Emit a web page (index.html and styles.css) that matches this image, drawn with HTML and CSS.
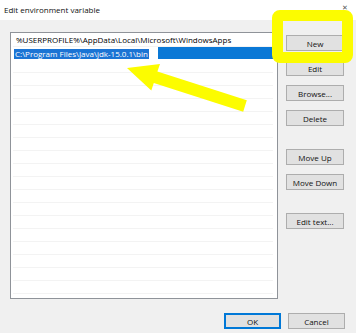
FILE: index.html
```html
<!DOCTYPE html>
<html lang="en">
<head>
  <meta charset="UTF-8">
  <title>Edit environment variable</title>
  <link rel="stylesheet" href="styles.css">
</head>
<body>
  <div class="window">
    <div class="titlebar">
      <span class="title">Edit environment variable</span>
      <span class="close">&#x2715;</span>
    </div>
    <div class="main">
      <!-- path entries -->
      <div class="list">
        <div class="row">%USERPROFILE%\AppData\Local\Microsoft\WindowsApps</div>
        <div class="row selected"><span class="edit"><span class="sel">C:\Program Files\Java\jdk-15.0.1\bin</span></span></div>
        <div class="row"></div>
        <div class="row"></div>
        <div class="row"></div>
        <div class="row"></div>
        <div class="row"></div>
        <div class="row"></div>
        <div class="row"></div>
        <div class="row"></div>
        <div class="row"></div>
        <div class="row"></div>
        <div class="row"></div>
        <div class="row"></div>
        <div class="row"></div>
        <div class="row"></div>
        <div class="row"></div>
        <div class="row"></div>
        <div class="row"></div>
        <div class="row"></div>
      </div>
      <!-- side buttons -->
      <div class="actions">
        <button type="button" class="btn">New</button>
        <button type="button" class="btn">Edit</button>
        <button type="button" class="btn">Browse...</button>
        <button type="button" class="btn">Delete</button>
        <button type="button" class="btn spaced">Move Up</button>
        <button type="button" class="btn">Move Down</button>
        <button type="button" class="btn spaced">Edit text...</button>
      </div>
    </div>
    <div class="footer">
      <button type="button" class="btn default">OK</button>
      <button type="button" class="btn">Cancel</button>
    </div>

    <!-- annotations drawn over the dialog -->
    <div class="highlight"></div>
    <svg class="arrow" width="356" height="333" viewBox="0 0 356 333">
      <polygon points="127,68 160,64 157.4,71.5 246.8,100.3 243.2,111.7 153.8,82.9 151.3,90.5" fill="#fcfc00"/>
    </svg>
  </div>
</body>
</html>
```

FILE: styles.css
```css
* { margin: 0; padding: 0; box-sizing: border-box; }
html, body { height: 100%; }
body {
  font-family: 'Open Sans', 'Noto Sans', sans-serif;
  font-size: 8px;
  color: #000;
  background: #f0f0f0;
}
.window {
  position: relative;
  width: 356px;
  height: 333px;
  background: #f0f0f0;
  overflow: hidden;
}
/* Title bar */
.titlebar {
  height: 20px;
  background: #fff;
  display: flex;
  align-items: center;
  justify-content: space-between;
  padding: 0 8px 2px 4px;
}
.title {
  font-size: 8px;
  color: #111;
}
.close {
  font-size: 7px;
  color: #555;
  margin-top: -3px;
}
/* List + button column */
.main {
  display: flex;
  padding: 12px 0 0 10px;
}
.list {
  width: 268px;
  height: 267px;
  background: #fff;
  border: 1px solid #8f9399;
  padding: 1px 4px 0 2px;
  overflow: hidden;
}
.row {
  height: 13px;
  border-bottom: 1px solid #f3f3f3;
  line-height: 12px;
  padding-left: 3px;
  white-space: nowrap;
}
.row.selected {
  background: #0a78d6;
  padding-left: 0;
  border-bottom-color: #fff;
}
.edit {
  display: inline-block;
  width: 145px;
  height: 12px;
  background: #fff;
  padding: 1px 0 0 1px;
  vertical-align: top;
}
.sel {
  display: inline-block;
  height: 10px;
  line-height: 10px;
  padding: 0 1px;
  background: #1b74d4;
  color: #fff;
}
.actions {
  display: flex;
  flex-direction: column;
  gap: 9px;
  width: 58px;
  margin-left: 8px;
  padding-top: 3px;
}
.btn {
  height: 16px;
  font-family: inherit;
  font-size: 8px;
  color: #111;
  background: #e1e1e1;
  border: 1px solid #adadad;
}
.actions .spaced {
  margin-top: 14px;
}
/* OK / Cancel */
.footer {
  display: flex;
  justify-content: flex-end;
  gap: 7px;
  padding: 14px 11px 0 0;
}
.footer .btn {
  width: 57px;
}
.btn.default {
  border: 1px solid #0078d7;
  box-shadow: inset 0 0 0 1px #0078d7;
}
/* Yellow annotations */
.highlight {
  position: absolute;
  left: 272px;
  top: 10px;
  width: 81px;
  height: 53px;
  border: 11px solid #fcfc00;
  border-radius: 8px;
}
.arrow {
  position: absolute;
  left: 0;
  top: 0;
}
```
